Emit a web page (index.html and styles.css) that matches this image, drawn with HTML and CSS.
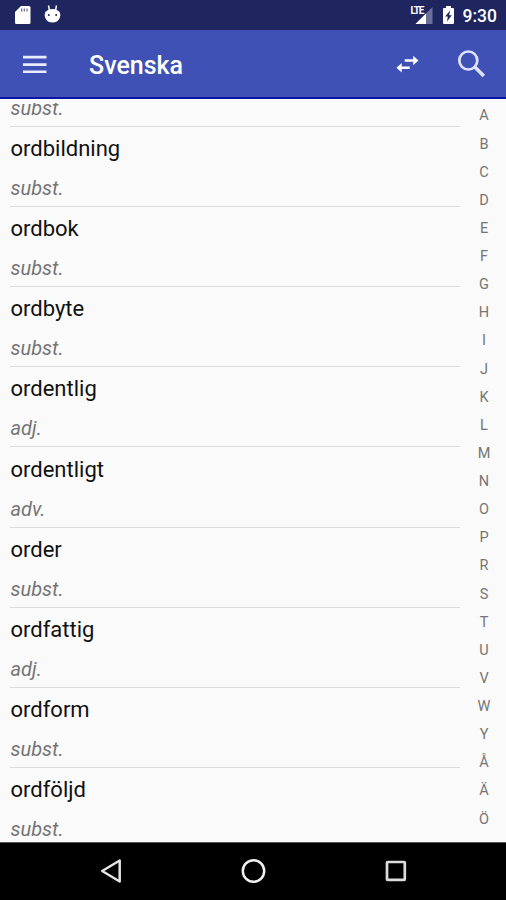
FILE: index.html
```html
<!DOCTYPE html>
<html lang="sv">
<head>
<meta charset="utf-8">
<title>Svenska</title>
<link rel="stylesheet" href="styles.css">
</head>
<body>
<div class="screen">
  <header class="status">
    <svg class="status-left" width="70" height="30" viewBox="0 0 70 30">
      <path fill="#fff" d="M21 6h8q1.500 0 1.500 1.500v15q0 1.500-1.500 1.500h-12.500q-1.500 0-1.500-1.500V12z"/>
      <path stroke="#1f265f" stroke-opacity=".7" stroke-width="1.200" d="M21.700 8.500v3M24.300 8.500v3M27 8.500v3"/>
      <path fill="#fff" d="M45.500 11.500h14q1.500 3 .2 6.500-2 4.500-7.200 4.500t-7.200-4.500Q44 14.500 45.500 11.500z"/>
      <path fill="#fff" d="M45.800 12q2-3 6.700-3t6.700 3z"/>
      <path stroke="#fff" stroke-width="1.500" d="M48.500 5.500l1 5M56.500 5.500l-1 5"/>
      <circle cx="48.800" cy="15" r="1" fill="#1f265f"/><circle cx="56.200" cy="15" r="1" fill="#1f265f"/>
    </svg>
    <div class="status-right">
      <div class="signal">
        <svg width="24" height="30" viewBox="0 0 24 30">
          <path fill="#697099" d="M22.500 7v17h-17z"/>
          <path fill="#fff" d="M16 13.500V24H5.500z"/>
        </svg>
        <span class="lte">LTE</span>
      </div>
      <svg class="battery" width="13" height="30" viewBox="0 0 13 30">
        <path fill="#fff" d="M4 6h5v2h2q1 0 1 1v14q0 1-1 1H2q-1 0-1-1V9q0-1 1-1h2z"/>
        <path fill="#1f265f" d="M8 10.500L3.200 16.500h2.600L5 21.500l4.800-6.300H7.200z"/>
      </svg>
      <span class="clock">9:30</span>
    </div>
  </header>
  <div class="appbar">
    <svg class="menu" width="24" height="18" viewBox="0 0 24 18"><path fill="#e9edff" d="M0 .8h23.500v2.600H0zM0 8.300h23.500v2.600H0zM0 15.400h23.500V18H0z"/></svg>
    <h1 class="title">Svenska</h1>
    <svg class="swap" width="24" height="18" viewBox="0 0 24 18"><path fill="#fff" d="M8.700 4.200h8.500V.7l5.300 4.800-5.300 4.700V6.800H8.700zM13.700 11.500H5.700V8L.5 12.700l5.200 4.800V14h8z"/></svg>
    <svg class="search" width="30" height="30" viewBox="0 0 30 30"><circle cx="11.300" cy="11.500" r="9" fill="none" stroke="#dce2ff" stroke-width="2.700"/><path stroke="#dce2ff" stroke-width="3.600" d="M17.600 17.800l9.200 9.200"/></svg>
  </div>
  <main class="content">
    <ul class="words">
      <li class="row row-partial"><span class="kind">subst.</span></li>
      <li class="row"><span class="word">ordbildning</span><span class="kind">subst.</span></li>
      <li class="row"><span class="word">ordbok</span><span class="kind">subst.</span></li>
      <li class="row"><span class="word">ordbyte</span><span class="kind">subst.</span></li>
      <li class="row"><span class="word">ordentlig</span><span class="kind">adj.</span></li>
      <li class="row"><span class="word">ordentligt</span><span class="kind">adv.</span></li>
      <li class="row"><span class="word">order</span><span class="kind">subst.</span></li>
      <li class="row"><span class="word">ordfattig</span><span class="kind">adj.</span></li>
      <li class="row"><span class="word">ordform</span><span class="kind">subst.</span></li>
      <li class="row"><span class="word">ordföljd</span><span class="kind">subst.</span></li>
    </ul>
    <nav class="letters">
      <span>A</span><span>B</span><span>C</span><span>D</span><span>E</span><span>F</span><span>G</span><span>H</span><span>I</span><span>J</span><span>K</span><span>L</span><span>M</span><span>N</span><span>O</span><span>P</span><span>R</span><span>S</span><span>T</span><span>U</span><span>V</span><span>W</span><span>Y</span><span>Å</span><span>Ä</span><span>Ö</span>
    </nav>
  </main>
  <footer class="navbar">
    <svg width="26" height="28" viewBox="0 0 26 28"><path fill="none" stroke="#e4e4e4" stroke-width="2.500" stroke-linejoin="round" d="M21.700 3.500v21L4.200 14z"/></svg>
    <svg width="26" height="28" viewBox="0 0 26 28"><circle cx="13.500" cy="14" r="10.700" fill="none" stroke="#f0f0f0" stroke-width="2.500"/></svg>
    <svg width="26" height="28" viewBox="0 0 26 28"><rect x="4" y="5" width="17.800" height="17.800" rx=".6" fill="none" stroke="#dcdcdc" stroke-width="2.700"/></svg>
  </footer>
</div>
</body>
</html>
```
FILE: styles.css
```css
* { box-sizing: border-box; }
body { margin: 0; font-family: Roboto, "Liberation Sans", sans-serif; }
svg { display: block; flex: none; }
.screen {
  display: flex;
  flex-direction: column;
  width: 506px;
  height: 900px;
  overflow: hidden;
  background: #fafafa;
}
.status {
  display: flex;
  justify-content: space-between;
  flex: none;
  height: 30px;
  background: #1f265f;
  color: #fff;
}
.status-right { display: flex; padding-right: 9px; }
.signal { position: relative; margin-right: 8px; }
.lte {
  position: absolute;
  left: 1px;
  top: 6px;
  font-size: 10px;
  line-height: 10px;
  font-weight: 700;
  letter-spacing: -1.2px;
}
.battery { margin-right: 8px; }
.clock { font-size: 17.5px; line-height: 32px; font-weight: 500; }
.appbar {
  display: flex;
  align-items: center;
  flex: none;
  height: 69px;
  padding: 0 19px 0 23px;
  border-bottom: 2px solid #0b14a8;
  background: #3f51b5;
  color: #fff;
}
.title {
  flex: 1;
  margin: 5px 0 0 42px;
  font-size: 25px;
  line-height: 32px;
  font-weight: 500;
}
.swap { margin-right: 37px; }
.content {
  display: flex;
  flex: none;
  height: 743px;
  border-top: 4px solid #fafafa;
  overflow: hidden;
}
.words {
  flex: none;
  width: 450px;
  margin: -10px 0 0 10px;
  padding: 0;
  list-style: none;
}
.row {
  display: flex;
  flex-direction: column;
  height: 80.17px;
  padding: 6.2px 0 0 0.5px;
  border-bottom: 1px solid #dcdcdc;
}
.row-partial { height: 33.8px; padding-top: 0; }
.word { font-size: 22px; line-height: 32px; color: #111; }
.kind {
  margin-top: 8px;
  font-size: 20px;
  line-height: 30px;
  font-style: italic;
  color: #757575;
}
.row-partial .kind { margin-top: 0; }
.letters {
  display: flex;
  flex-direction: column;
  width: 48px;
  margin-top: -0.6px;
  padding-left: 2px;
  text-align: center;
  font-size: 14.5px;
  line-height: 28.12px;
  color: #757575;
}
.navbar {
  display: flex;
  justify-content: center;
  gap: 116.5px;
  flex: 1;
  padding-top: 14px;
  border-top: 1px solid #555;
  background: #000;
}
```
